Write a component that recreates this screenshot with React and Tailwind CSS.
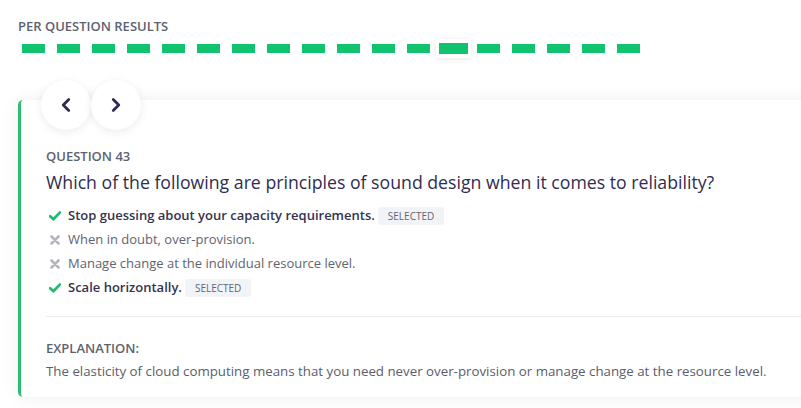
import { ChevronLeft, ChevronRight } from 'lucide-react';

const TOTAL = 18;
const CURRENT = 12;

const options = [
  { text: 'Stop guessing about your capacity requirements.', correct: true, selected: true },
  { text: 'When in doubt, over-provision.', correct: false, selected: false },
  { text: 'Manage change at the individual resource level.', correct: false, selected: false },
  { text: 'Scale horizontally.', correct: true, selected: true },
];

function CheckIcon() {
  return (
    <svg width="12" height="10" viewBox="0 0 12 10" className="shrink-0">
      <path d="M1.2 5.2 L4.4 8.2 L10.8 1.6" fill="none" stroke="#1cbf72" strokeWidth="2.8" strokeLinecap="round" strokeLinejoin="round" />
    </svg>
  );
}

function CrossIcon() {
  return (
    <svg width="12" height="10" viewBox="0 0 12 10" className="shrink-0">
      <path d="M2.5 1.5 L9.5 8.5 M9.5 1.5 L2.5 8.5" fill="none" stroke="#b3b6be" strokeWidth="2.6" strokeLinecap="round" />
    </svg>
  );
}

export default function App() {
  return (
    <div className="w-[801px] h-[408px] overflow-hidden bg-white font-['Open_Sans',sans-serif]">
      {/* results strip */}
      <div className="pt-[18px] pl-[18px]">
        <div className="text-[13px] leading-[16px] font-semibold text-[#5d6270]">
          PER QUESTION RESULTS
        </div>
        <div className="flex items-center mt-[4px] -ml-[2px] h-[20px]">
          {Array.from({ length: TOTAL }).map((_, i) =>
            i === CURRENT ? (
              <div key={i} className="px-[3px] py-[4px] bg-white shadow-[0_1px_6px_rgba(0,0,0,0.1)]">
                <div className="w-[29px] h-[11px] bg-[#11c36f]" />
              </div>
            ) : (
              <div key={i} className="px-[6px] py-[4px]">
                <div className="w-[23px] h-[9px] bg-[#11c36f]" />
              </div>
            ),
          )}
        </div>
      </div>

      {/* question card */}
      <div className="relative mt-[42px] ml-[18px] w-[820px] bg-white border-l-[3px] border-[#2cbd73] rounded-l-[5px] shadow-[0_0_18px_rgba(0,0,0,0.07)]">
        <div className="absolute -top-[20px] left-[20px] flex">
          <button className="w-[50px] h-[50px] rounded-full bg-white shadow-[0_2px_10px_rgba(0,0,0,0.08)] flex items-center justify-center">
            <ChevronLeft size={22} strokeWidth={3} color="#2e2b52" />
          </button>
          <button className="w-[50px] h-[50px] rounded-full bg-white shadow-[0_2px_10px_rgba(0,0,0,0.08)] flex items-center justify-center">
            <ChevronRight size={22} strokeWidth={3} color="#2e2b52" />
          </button>
        </div>

        <div className="pl-[25px] pt-[48px]">
          <div className="text-[13px] leading-[16px] font-semibold text-[#5d6270]">QUESTION 43</div>
          <h2 className="mt-[6px] text-[17.7px] leading-[24px] font-medium text-[#2f2d50]">
            Which of the following are principles of sound design when it comes to reliability?
          </h2>
          <ul className="mt-[10px] flex flex-col">
            {options.map((o) => (
              <li key={o.text} className="flex items-center h-[24px] pl-[3px]">
                {o.correct ? <CheckIcon /> : <CrossIcon />}
                <span
                  className={
                    o.selected
                      ? 'ml-[7px] text-[13px] font-semibold text-[#34334f]'
                      : 'ml-[7px] text-[13px] text-[#5f6371]'
                  }
                >
                  {o.text}
                </span>
                {o.selected && (
                  <span className="ml-[3px] px-[10px] h-[18px] flex items-center rounded-[3px] bg-[#f1f3f7] text-[10px] text-[#5f6678]">
                    SELECTED
                  </span>
                )}
              </li>
            ))}
          </ul>
          <div className="mt-[16px] border-t border-[#ececef]" />
          <div className="pt-[23px] pb-[17px]">
            <div className="text-[13px] leading-[16px] font-semibold text-[#5d6270]">EXPLANATION:</div>
            <p className="mt-[6px] text-[13.3px] leading-[18px] text-[#5a5e6b]">
              The elasticity of cloud computing means that you need never over-provision or manage change at the resource level.
            </p>
          </div>
        </div>
      </div>
    </div>
  );
}
